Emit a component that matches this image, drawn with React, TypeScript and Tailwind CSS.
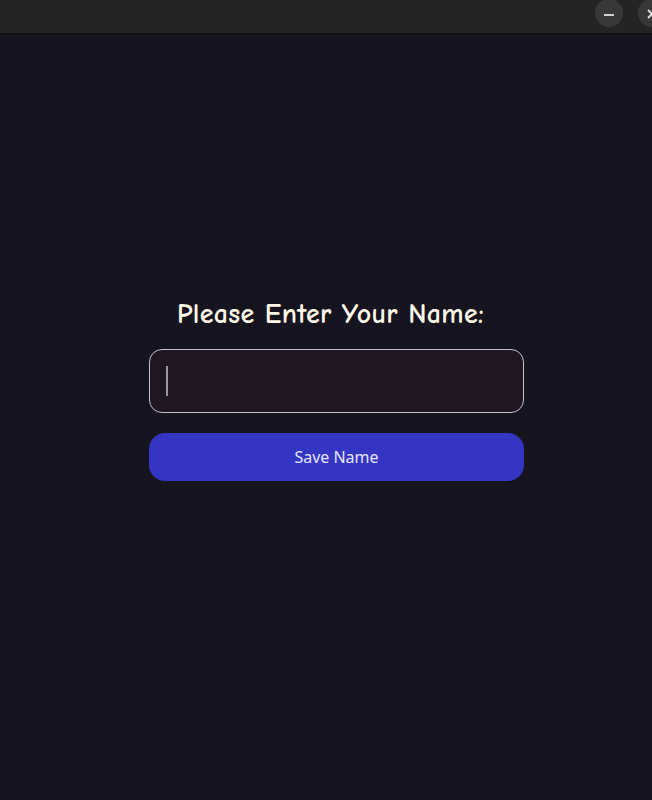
import React from "react";

export default function App() {
  return (
    <div className="w-[652px] h-[800px] overflow-hidden flex flex-col bg-[#16141f]">
      <div className="h-[35px] shrink-0 bg-[#242424] border-b-2 border-[#111111] flex items-start justify-end relative overflow-hidden">
        <div className="flex gap-[15px] mr-[-14px] mt-[-1px]">
          <div className="w-[28px] h-[28px] rounded-full bg-[#383838] flex items-center justify-center">
            <div className="w-[10px] h-[2px] bg-[#d0d0d0] mt-[3px]" />
          </div>
          <div className="w-[28px] h-[28px] rounded-full bg-[#383838] flex items-center justify-center">
            <svg width="10" height="10" viewBox="0 0 10 10" className="mt-[2px]">
              <path d="M1 1 L9 9 M9 1 L1 9" stroke="#e8e8e8" strokeWidth="1.8" />
            </svg>
          </div>
        </div>
      </div>
      <div className="flex-1 flex flex-col items-center pt-[262px] pl-[21px]">
        <h1
          className="text-[28px] font-bold text-[#fff8e8] leading-[34px] tracking-[0.3px] mr-[12px]"
          style={{ fontFamily: '"Comic Sans MS", "Comic Neue", "DejaVu Sans", sans-serif' }}
        >
          Please Enter Your Name:
        </h1>
        <div className="mt-[18px] w-[375px] h-[64px] rounded-[13px] border-[1.5px] border-[#c4c0cc] bg-[#1e1721] flex items-center pl-[16px]">
          <div className="w-[1.5px] h-[30px] bg-[#9a96a2]" />
        </div>
        <button
          className="mt-[20px] w-[375px] h-[48px] rounded-[16px] bg-[#3535c3] text-[#e4e4ff] text-[16px]"
          style={{ fontFamily: '"Noto Sans", "Open Sans", sans-serif' }}
        >
          Save Name
        </button>
      </div>
    </div>
  );
}
